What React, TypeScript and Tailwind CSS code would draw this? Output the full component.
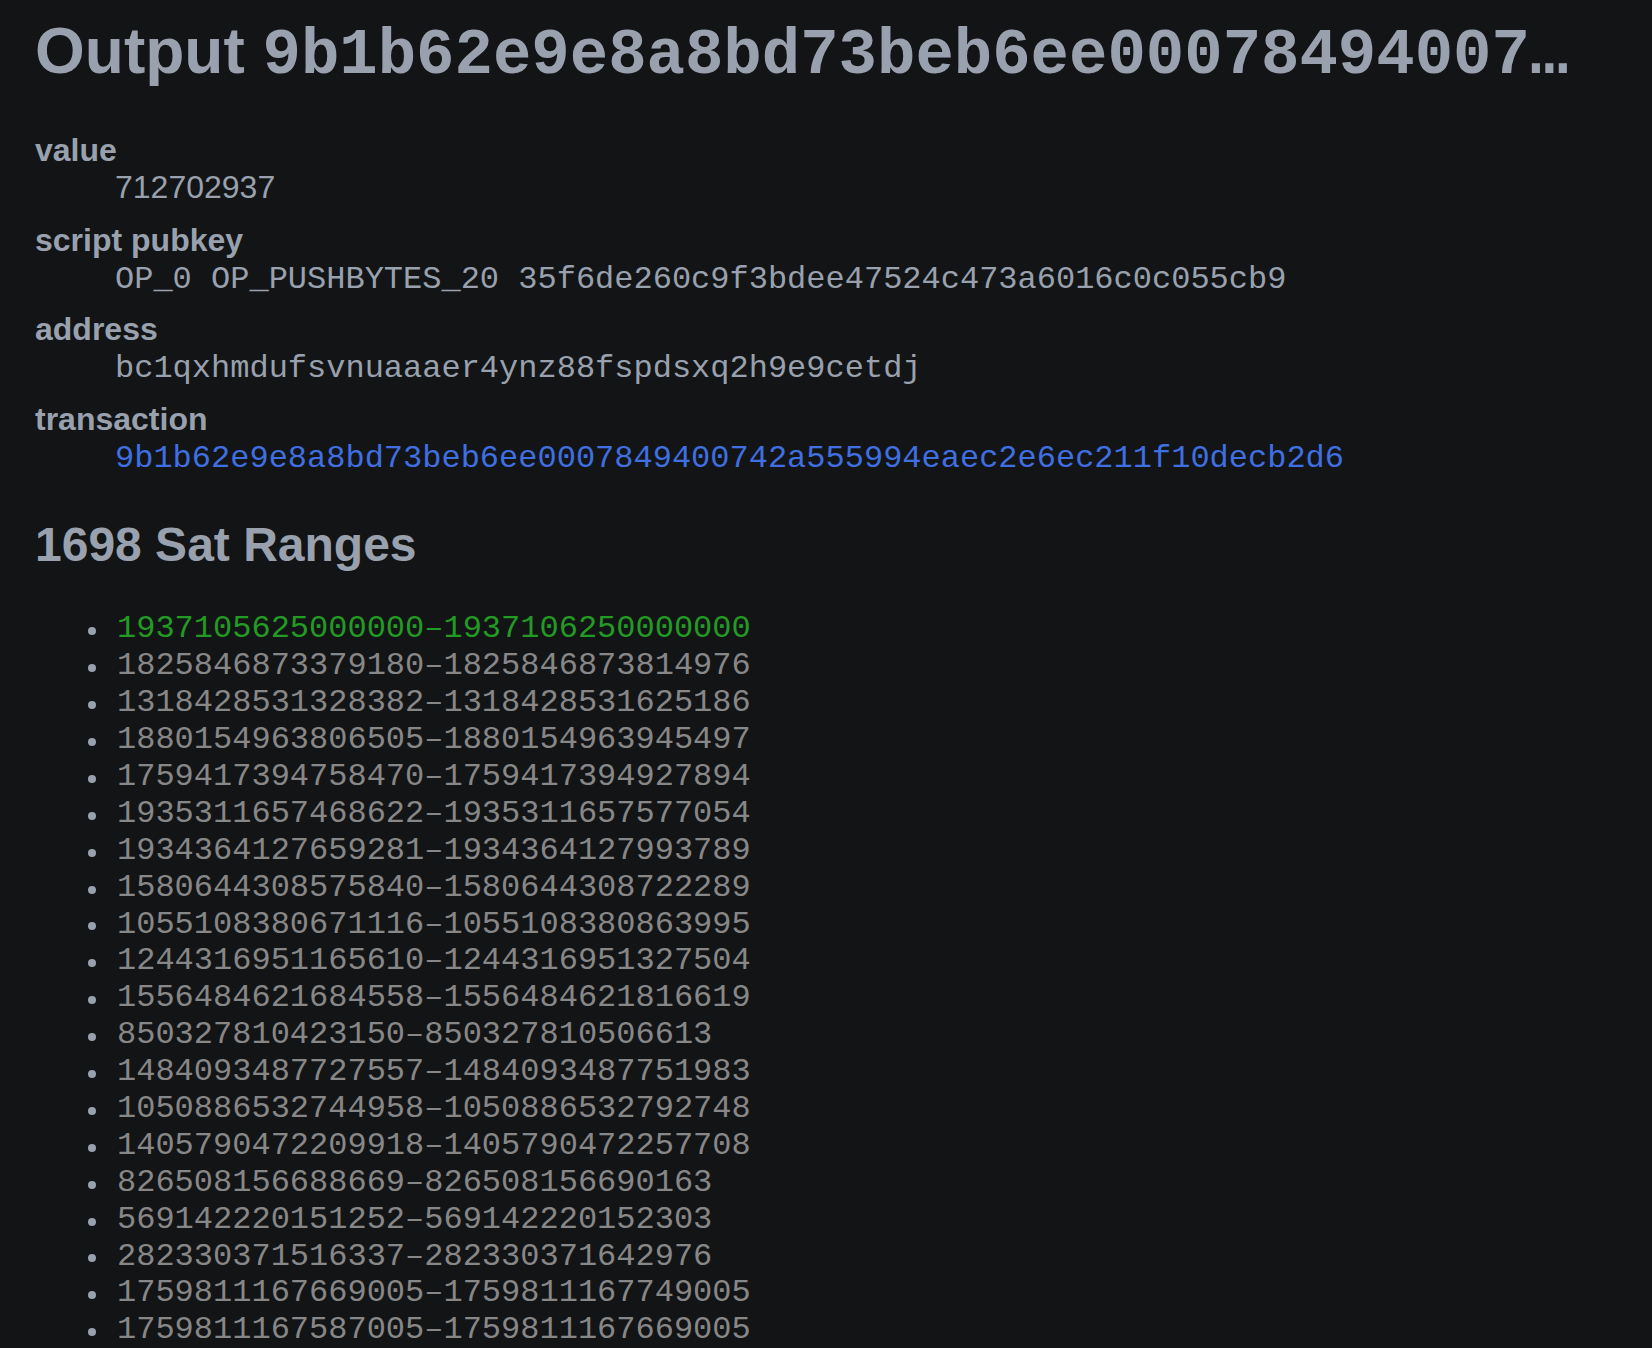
const ranges: [string, string][] = [
  ["1937105625000000", "1937106250000000"],
  ["1825846873379180", "1825846873814976"],
  ["1318428531328382", "1318428531625186"],
  ["1880154963806505", "1880154963945497"],
  ["1759417394758470", "1759417394927894"],
  ["1935311657468622", "1935311657577054"],
  ["1934364127659281", "1934364127993789"],
  ["1580644308575840", "1580644308722289"],
  ["1055108380671116", "1055108380863995"],
  ["1244316951165610", "1244316951327504"],
  ["1556484621684558", "1556484621816619"],
  ["850327810423150", "850327810506613"],
  ["1484093487727557", "1484093487751983"],
  ["1050886532744958", "1050886532792748"],
  ["1405790472209918", "1405790472257708"],
  ["826508156688669", "826508156690163"],
  ["569142220151252", "569142220152303"],
  ["282330371516337", "282330371642976"],
  ["1759811167669005", "1759811167749005"],
  ["1759811167587005", "1759811167669005"],
];

const txid = "9b1b62e9e8a8bd73beb6ee0007849400742a555994eaec2e6ec211f10decb2d6";

const sans = "font-['Liberation_Sans',Arial,sans-serif]";
const mono = "font-['Liberation_Mono','Courier_New',monospace]";

export default function App() {
  return (
    <div className={`min-h-screen bg-[#131416] text-[#98a1ad] pl-[35px] pr-[52px] ${sans}`}>
      {/* ellipsis takes the h1's font, so the h1 itself is mono */}
      <h1 className={`pt-[13px] text-[64px] leading-[77px] font-bold whitespace-nowrap overflow-hidden text-ellipsis ${mono}`}>
        <span className={sans}>Output </span>
        {txid}:0
      </h1>

      <dl className="mt-[37px]">
        <dt className="text-[32px] leading-[37px] font-bold">value</dt>
        <dd className="ml-[80px] text-[32px] leading-[37px] pb-[5px] mb-[10.6px]">712702937</dd>

        <dt className="text-[32px] leading-[37px] font-bold">script pubkey</dt>
        <dd className={`ml-[80px] text-[32px] leading-[42px] mb-[10.6px] ${mono}`}>
          OP_0 OP_PUSHBYTES_20 35f6de260c9f3bdee47524c473a6016c0c055cb9
        </dd>

        <dt className="text-[32px] leading-[37px] font-bold">address</dt>
        <dd className={`ml-[80px] text-[32px] leading-[42px] mb-[10.6px] ${mono}`}>
          bc1qxhmdufsvnuaaaer4ynz88fspdsxq2h9e9cetdj
        </dd>

        <dt className="text-[32px] leading-[37px] font-bold">transaction</dt>
        <dd className={`ml-[80px] text-[32px] leading-[42px] mb-[10.6px] ${mono}`}>
          <a href="#" className="text-[#3f6fe0]">{txid}</a>
        </dd>
      </dl>

      <h2 className="mt-[36px] text-[48px] leading-[57.6px] font-bold">1698 Sat Ranges</h2>

      <ul className="mt-[38px] pl-[53px]">
        {ranges.map(([a, b], i) => (
          <li key={i} className="flex items-center h-[36.9px]">
            <span className="mt-[3px] mr-[21px] w-[8px] h-[8px] rounded-full bg-[#98a1ad] shrink-0" />
            <span
              className={`text-[32px] leading-[36.9px] whitespace-nowrap ${mono} ${
                i === 0 ? "text-[#239a23]" : "text-[#878787]"
              }`}
            >
              {a}–{b}
            </span>
          </li>
        ))}
      </ul>
    </div>
  );
}
